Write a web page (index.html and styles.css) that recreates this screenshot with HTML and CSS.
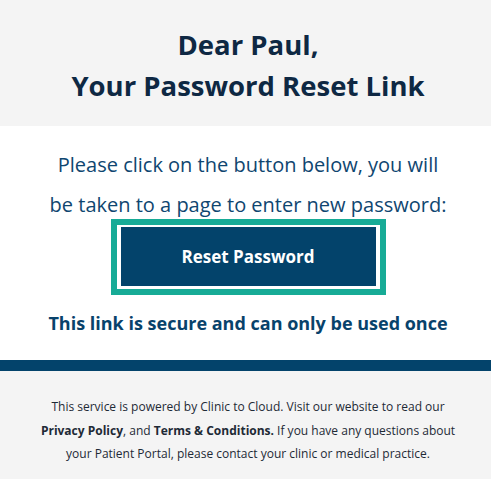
FILE: index.html
```html
<!DOCTYPE html>
<html lang="en">
<head>
    <meta charset="UTF-8">
    <title>Your Password Reset Link</title>
    <link rel="stylesheet" href="styles.css">
</head>
<body>
<main>
    <!-- greeting header -->
    <header class="mail-header">
        <h1>Dear Paul,<br>Your Password Reset Link</h1>
    </header>

    <!-- main message with the reset button -->
    <section class="mail-body">
        <p class="intro">Please click on the button below, you will<br>be taken to a page to enter new password:</p>
        <div class="button-frame">
            <a class="reset-button" href="#">Reset Password</a>
        </div>
        <p class="secure-note">This link is secure and can only be used once</p>
    </section>

    <div class="divider"></div>

    <!-- footer info -->
    <footer class="mail-footer">
        <p>This service is powered by Clinic to Cloud. Visit our website to read our
            <b>Privacy Policy</b>, and <b>Terms &amp; Conditions.</b> If you have any questions about
            your Patient Portal, please contact your clinic or medical practice.</p>
    </footer>
</main>
</body>
</html>
```

FILE: styles.css
```css
body {
    margin: 0;
    padding: 0;
    background-color: #ffffff;
    font-family: "Open Sans", Arial, sans-serif;
}

main {
    width: 491px;
}

.mail-header {
    background-color: #f4f4f4;
    height: 126px;
    padding: 24px 0 0 5px;
    box-sizing: border-box;
    text-align: center;
}

.mail-header h1 {
    margin: 0;
    font-size: 27.5px;
    line-height: 41px;
    font-weight: 700;
    color: #0e2843;
}

.mail-body {
    height: 234px;
    display: flex;
    flex-direction: column;
    align-items: center;
    padding: 19px 0 0 5px;
    box-sizing: border-box;
}

.intro {
    margin: 0;
    font-size: 20px;
    line-height: 40px;
    color: #0f4670;
    text-align: center;
}

.button-frame {
    margin-top: -6px;
    border: 6px solid #17ab96;
    padding: 2px 4px 3px;
    background-color: #ffffff;
}

.reset-button {
    display: flex;
    align-items: center;
    justify-content: center;
    width: 255px;
    height: 59px;
    background-color: #03436b;
    color: #ffffff;
    font-size: 17px;
    font-weight: 700;
    text-decoration: none;
}

.secure-note {
    margin: 16px 0 0;
    font-size: 18px;
    line-height: 24px;
    font-weight: 700;
    color: #08426b;
    text-align: center;
}

.divider {
    height: 11px;
    background-color: #03436b;
}

.mail-footer {
    background-color: #f4f4f4;
    height: 108px;
    padding: 24px 30px 0 35px;
    box-sizing: border-box;
}

.mail-footer p {
    margin: 0;
    font-size: 12px;
    line-height: 23.5px;
    color: #1e2a36;
    text-align: center;
}

.mail-footer b {
    font-weight: 700;
}
```
